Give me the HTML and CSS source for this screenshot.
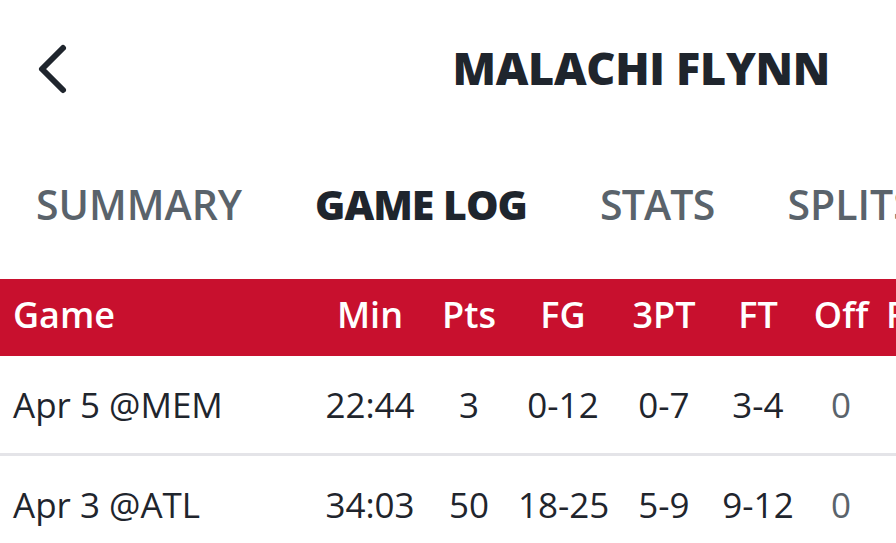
FILE: index.html
```html
<!DOCTYPE html>
<html lang="en">
<head>
<meta charset="utf-8">
<title>Malachi Flynn - Game Log</title>
<link rel="stylesheet" href="styles.css">
</head>
<body>
<div class="screen">
  <header class="topbar">
    <button class="back" aria-label="Back">
      <svg width="34" height="52" viewBox="0 0 34 52"><path d="M27 5 L6 26 L27 47" fill="none" stroke="#1f252d" stroke-width="6" stroke-linecap="round" stroke-linejoin="round"/></svg>
    </button>
    <h1 class="title">MALACHI FLYNN</h1>
  </header>
  <nav class="tabs">
    <span class="tab">SUMMARY</span>
    <span class="tab active">GAME LOG</span>
    <span class="tab narrow">STATS</span>
    <span class="tab">SPLITS</span>
  </nav>
  <div class="table">
    <div class="row head">
      <span class="c game">Game</span>
      <span class="c min">Min</span>
      <span class="c pts">Pts</span>
      <span class="c fg">FG</span>
      <span class="c tp">3PT</span>
      <span class="c ft">FT</span>
      <span class="c off">Off</span>
      <span class="c reb">Reb</span>
    </div>
    <div class="row line">
      <span class="c game">Apr 5 @MEM</span>
      <span class="c min">22:44</span>
      <span class="c pts">3</span>
      <span class="c fg">0-12</span>
      <span class="c tp">0-7</span>
      <span class="c ft">3-4</span>
      <span class="c off muted">0</span>
      <span class="c reb">4</span>
    </div>
    <div class="row">
      <span class="c game">Apr 3 @ATL</span>
      <span class="c min">34:03</span>
      <span class="c pts">50</span>
      <span class="c fg">18-25</span>
      <span class="c tp">5-9</span>
      <span class="c ft">9-12</span>
      <span class="c off muted">0</span>
      <span class="c reb">3</span>
    </div>
  </div>
</div>
</body>
</html>
```
FILE: styles.css
```css
html, body {
  margin: 0;
  padding: 0;
  background: #ffffff;
}
body {
  font-family: "Open Sans", "Noto Sans", sans-serif;
  color: #1f252d;
  overflow: hidden;
  width: 896px;
  height: 543px;
}
.screen {
  width: 896px;
}
.topbar {
  display: flex;
  align-items: center;
  height: 138px;
  box-sizing: border-box;
  padding-bottom: 4px;
}
.back {
  border: none;
  background: none;
  padding: 0;
  margin-left: 36px;
  width: 34px;
  height: 52px;
  display: flex;
  margin-top: 4px;
}
.title {
  margin: 0 0 0 auto;
  padding-right: 66px;
  font-size: 45px;
  font-weight: 800;
  letter-spacing: -0.3px;
  color: #1f252d;
  line-height: 1;
}
.tabs {
  display: flex;
  gap: 73px;
  padding-left: 36px;
  height: 141px;
  box-sizing: border-box;
  padding-bottom: 8px;
  align-items: center;
  white-space: nowrap;
}
.tab {
  font-size: 41px;
  font-weight: 600;
  color: #5a636b;
  line-height: 1;
}
.tab.narrow {
  letter-spacing: -0.8px;
}
.tab.active {
  font-weight: 800;
  color: #1f252d;
  letter-spacing: -1px;
}
.table {
  width: 1200px;
}
.row {
  display: grid;
  grid-template-columns: 320px 100px 98px 90px 112px 76px 90px 56px;
  align-items: center;
  height: 97px;
  font-size: 35px;
  white-space: nowrap;
}
.row.head {
  height: 77px;
  box-sizing: border-box;
  padding-bottom: 6px;
  background: #c8102e;
  color: #ffffff;
  font-size: 36px;
  font-weight: 600;
}
.row.line {
  height: 97px;
  border-bottom: 3px solid #e4e4e8;
}
.c {
  text-align: center;
  line-height: 1;
}
.c.game {
  text-align: left;
  padding-left: 13px;
}
.muted {
  color: #5a636b;
}
```
